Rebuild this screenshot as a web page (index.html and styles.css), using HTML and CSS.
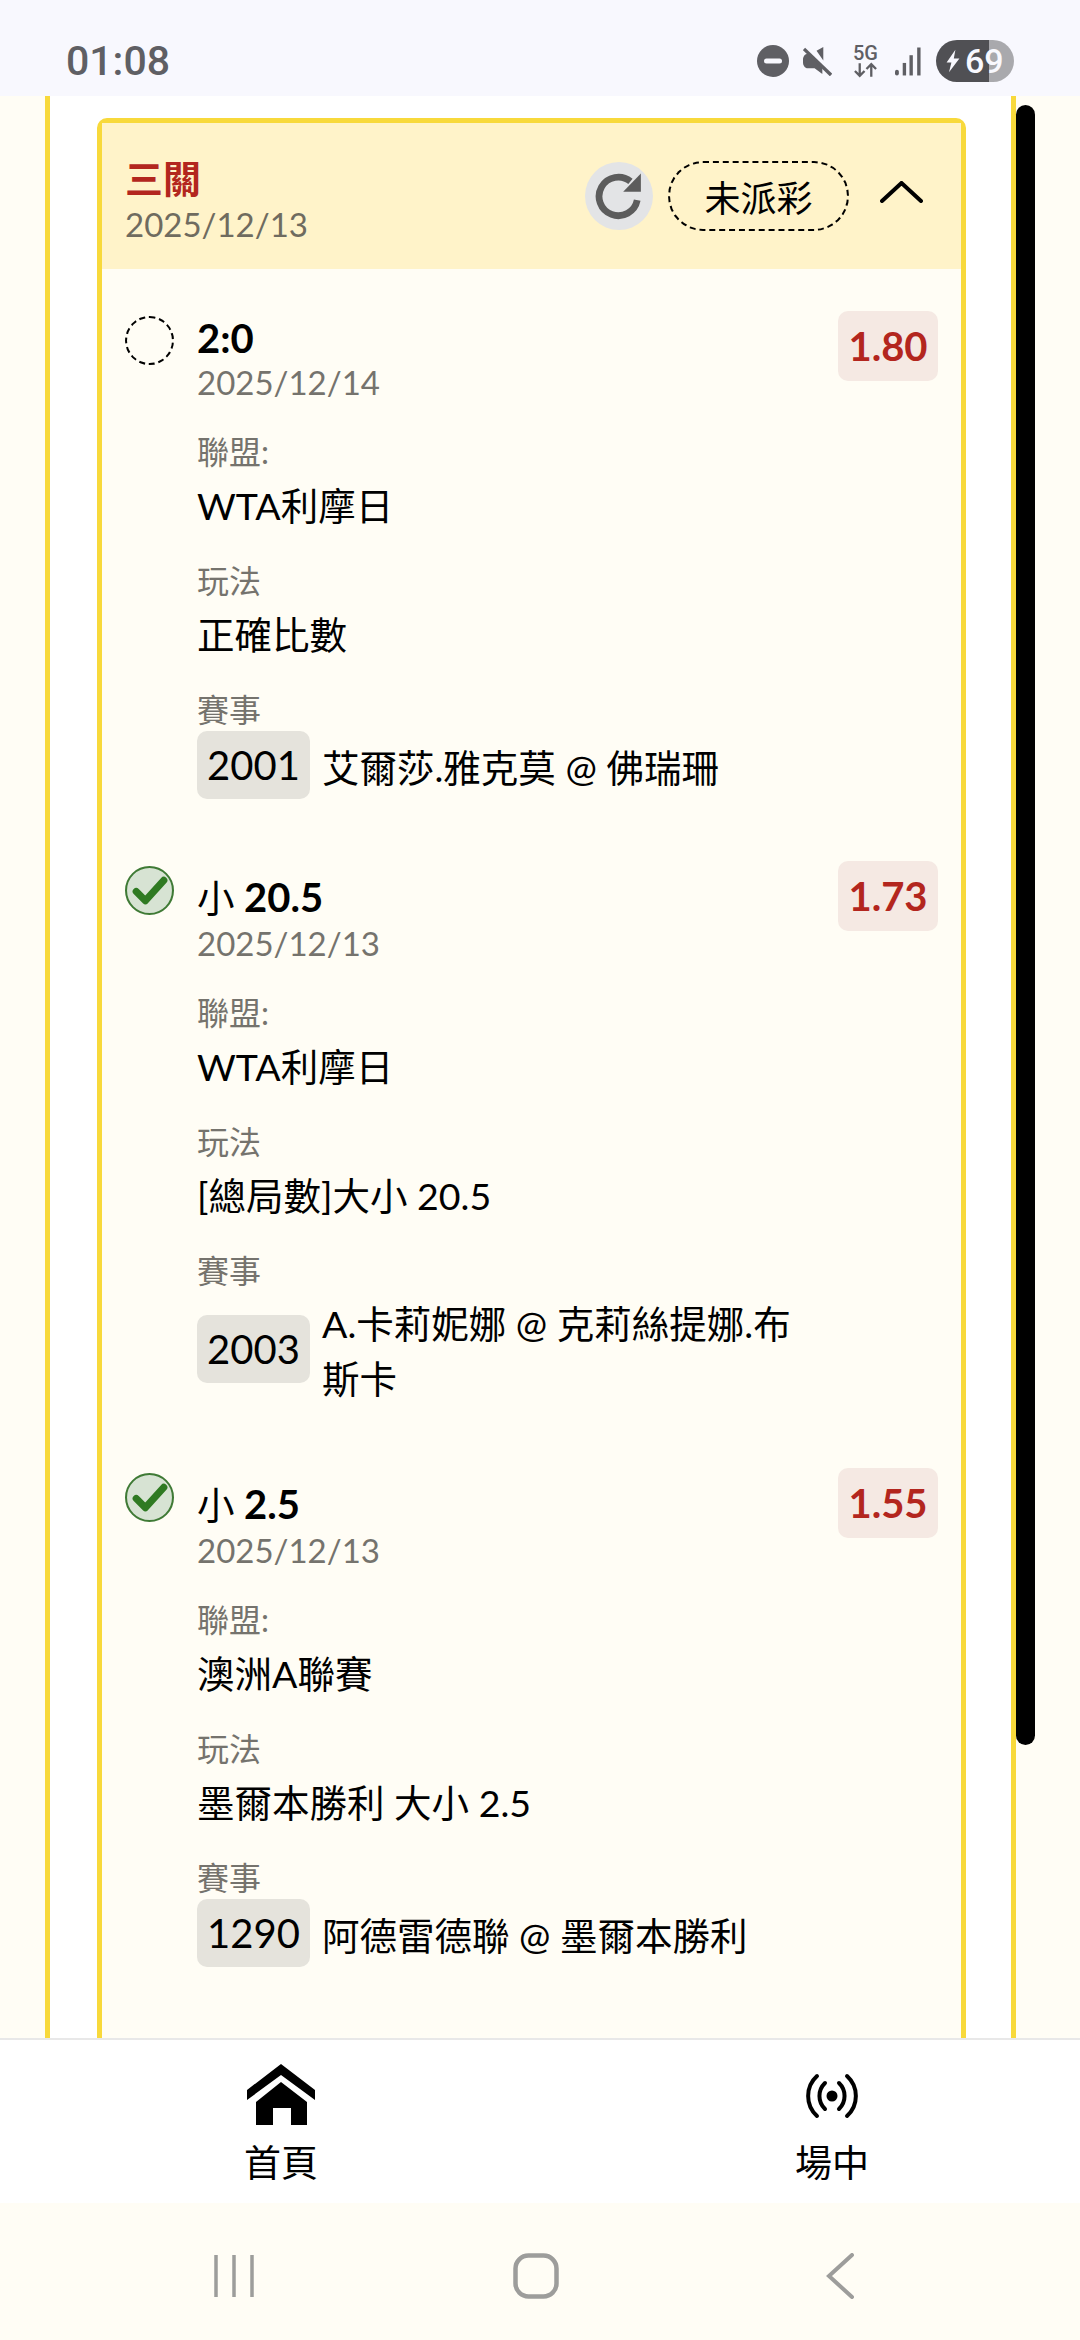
FILE: index.html
```html
<!DOCTYPE html>
<html lang="zh-Hant">
<head>
    <meta charset="UTF-8">
    <meta name="viewport" content="width=device-width, initial-scale=1.0">
    <title>三關</title>
    <link rel="stylesheet" href="styles.css">
</head>
<body>
    <div class="status-bar">
        <span class="clock">01:08</span>
        <div class="status-icons">
            <svg class="icon-dnd" viewBox="0 0 32 32"><circle cx="16" cy="16" r="16" fill="#5f5f64"/><rect x="7" y="13.5" width="18" height="5" rx="2.5" fill="#f8f8fe"/></svg>
            <svg class="icon-mute" viewBox="0 0 30 30"><path d="M0 13c0-3 2-6 5-6h3l12 12v9l-8-6H5c-3 0-5-3-5-6z M14 4l7-4v14z" fill="#5f5f64"/><path d="M3 0l27 28" stroke="#f8f8fe" stroke-width="4"/><path d="M1 2l28 27" stroke="#5f5f64" stroke-width="3.5"/></svg>
            <div class="net"><span class="net-label">5G</span><svg viewBox="0 0 26 16"><path d="M7 1v13M2 9l5 5 5-5M19 15V2M14 7l5-5 5 5" fill="none" stroke="#5f5f64" stroke-width="2.4"/></svg></div>
            <svg class="icon-signal" viewBox="0 0 28 30"><g fill="#5f5f64"><rect x="0" y="24" width="4" height="6" rx="2"/><rect x="8" y="17" width="3.5" height="13"/><rect x="15" y="9" width="3.5" height="21"/><rect x="23" y="1" width="3.5" height="29"/></g></svg>
            <div class="battery"><svg viewBox="0 0 20 28"><path d="M13 0L2 16h6L5 28 18 11h-7z" fill="#f8f8fe"/></svg><span>69</span></div>
        </div>
    </div>

    <main class="page">
        <div class="panel">
            <div class="bet-card">
                <div class="card-head">
                    <div>
                        <div class="card-title">三關</div>
                        <div class="card-date">2025/12/13</div>
                    </div>
                    <div class="card-actions">
                        <div class="refresh">
                            <svg viewBox="0 0 48 48"><path d="M41.5 28A18.5 18.5 0 1 1 35 10" fill="none" stroke="#5c5c5c" stroke-width="6.5"/><path d="M45 2.5V20H28z" fill="#5c5c5c"/></svg>
                        </div>
                        <div class="status-pill">未派彩</div>
                        <svg class="chevron" viewBox="0 0 43 22"><path d="M2 20L21.5 2 41 20" fill="none" stroke="#000" stroke-width="4" stroke-linecap="round"/></svg>
                    </div>
                </div>

                <div class="leg">
                    <div class="leg-mark pending"></div>
                    <div class="leg-body">
                        <div class="leg-top">
                            <div>
                                <div class="pick"><b>2:0</b></div>
                                <div class="leg-date">2025/12/14</div>
                            </div>
                            <div class="odds">1.80</div>
                        </div>
                        <div class="field-label">聯盟:</div>
                        <div class="field-value">WTA利摩日</div>
                        <div class="field-label">玩法</div>
                        <div class="field-value">正確比數</div>
                        <div class="field-label">賽事</div>
                        <div class="match">
                            <span class="match-no">2001</span>
                            <span class="match-name">艾爾莎.雅克莫 @ 佛瑞珊</span>
                        </div>
                    </div>
                </div>

                <div class="leg">
                    <svg class="leg-mark" viewBox="0 0 48 48"><circle cx="24" cy="24" r="23" fill="#d7e3d3" stroke="#3f7a35" stroke-width="2"/><path d="M11 25l9 9 18-20" fill="none" stroke="#2f7a22" stroke-width="7" stroke-linecap="round" stroke-linejoin="round"/></svg>
                    <div class="leg-body">
                        <div class="leg-top">
                            <div>
                                <div class="pick tall">小 <b>20.5</b></div>
                                <div class="leg-date">2025/12/13</div>
                            </div>
                            <div class="odds">1.73</div>
                        </div>
                        <div class="field-label">聯盟:</div>
                        <div class="field-value">WTA利摩日</div>
                        <div class="field-label">玩法</div>
                        <div class="field-value">[總局數]大小 20.5</div>
                        <div class="field-label">賽事</div>
                        <div class="match">
                            <span class="match-no">2003</span>
                            <span class="match-name">A.卡莉妮娜 @ 克莉絲提娜.布斯卡</span>
                        </div>
                    </div>
                </div>

                <div class="leg">
                    <svg class="leg-mark" viewBox="0 0 48 48"><circle cx="24" cy="24" r="23" fill="#d7e3d3" stroke="#3f7a35" stroke-width="2"/><path d="M11 25l9 9 18-20" fill="none" stroke="#2f7a22" stroke-width="7" stroke-linecap="round" stroke-linejoin="round"/></svg>
                    <div class="leg-body">
                        <div class="leg-top">
                            <div>
                                <div class="pick tall">小 <b>2.5</b></div>
                                <div class="leg-date">2025/12/13</div>
                            </div>
                            <div class="odds">1.55</div>
                        </div>
                        <div class="field-label">聯盟:</div>
                        <div class="field-value">澳洲A聯賽</div>
                        <div class="field-label">玩法</div>
                        <div class="field-value">墨爾本勝利 大小 2.5</div>
                        <div class="field-label">賽事</div>
                        <div class="match">
                            <span class="match-no">1290</span>
                            <span class="match-name">阿德雷德聯 @ 墨爾本勝利</span>
                        </div>
                    </div>
                </div>
            </div>
        </div>
        <div class="scrollbar"></div>
    </main>

    <nav class="tabs">
        <div class="tab">
            <svg class="tab-icon" viewBox="0 0 68 62"><path d="M34 0L68 26v10L34 11 0 36V26z" fill="#000"/><path d="M34 18L60 38v23H44V44H26v17H9V38z" fill="#000"/></svg>
            <span>首頁</span>
        </div>
        <div class="tab">
            <svg class="tab-icon" viewBox="0 0 68 62"><circle cx="34" cy="32" r="5.5" fill="#000"/><g fill="none" stroke="#000" stroke-width="4" stroke-linecap="round"><path d="M27 19A18 18 0 0 0 27 45M41 19A18 18 0 0 1 41 45"/><path d="M19 12A27 27 0 0 0 19 52M49 12A27 27 0 0 1 49 52"/></g></svg>
            <span>場中</span>
        </div>
    </nav>

    <div class="system-nav">
        <svg class="nav-recent" viewBox="0 0 42 44"><path d="M3 1v42M21 1v42M39 1v42" stroke="#9d9d9b" stroke-width="3.5" fill="none"/></svg>
        <svg class="nav-home" viewBox="0 0 46 46"><rect x="2.5" y="2.5" width="41" height="41" rx="13" fill="none" stroke="#9d9d9b" stroke-width="4.5"/></svg>
        <svg class="nav-back" viewBox="0 0 30 46"><path d="M27 2L4 23l23 21" fill="none" stroke="#9d9d9b" stroke-width="4" stroke-linecap="round"/></svg>
    </div>
</body>
</html>
```

FILE: styles.css
```css
* {
    box-sizing: border-box;
}
body {
    margin: 0;
    width: 1080px;
    height: 2340px;
    display: flex;
    flex-direction: column;
    overflow: hidden;
    background-color: #fffdf5;
    color: #000;
    font-family: Lato, "Noto Sans CJK TC", sans-serif;
}

/* status bar */
.status-bar {
    height: 96px;
    flex: none;
    display: flex;
    align-items: center;
    justify-content: space-between;
    padding: 26px 66px 0;
    background-color: #f8f8fe;
}
.clock {
    font-family: Roboto, sans-serif;
    font-size: 41px;
    font-weight: 500;
    color: #5f5f64;
}
.status-icons {
    display: flex;
    align-items: center;
}
.icon-dnd {
    width: 32px;
    height: 32px;
}
.icon-mute {
    width: 29px;
    height: 29px;
    margin-left: 14px;
}
.net {
    width: 25px;
    margin-left: 21px;
    display: flex;
    flex-direction: column;
    align-items: center;
}
.net-label {
    font-family: Roboto, sans-serif;
    font-size: 20px;
    line-height: 18px;
    font-weight: 500;
    color: #5f5f64;
}
.net svg {
    width: 25px;
    height: 16px;
}
.icon-signal {
    width: 27px;
    height: 30px;
    margin-left: 17px;
}
.battery {
    width: 78px;
    height: 42px;
    margin-left: 14px;
    border-radius: 21px;
    display: flex;
    align-items: center;
    padding-left: 9px;
    background: linear-gradient(90deg, #505054 0 53px, #a9a9ad 53px);
}
.battery svg {
    width: 16px;
    height: 24px;
}
.battery span {
    margin-left: 4px;
    font-family: Roboto, sans-serif;
    font-size: 34px;
    font-weight: 500;
    color: #f8f8fe;
}

/* page */
.page {
    position: relative;
    flex: 1;
    min-height: 0;
    overflow: hidden;
    padding: 0 64px 0 45px;
}
.panel {
    height: 100%;
    padding: 22px 45px 0 47px;
    background-color: #fff;
    border-left: 5px solid #f8d93b;
    border-right: 5px solid #f8d93b;
}
.scrollbar {
    position: absolute;
    left: 1016px;
    top: 9px;
    width: 19px;
    height: 1640px;
    border-radius: 10px;
    background-color: #000;
}
.bet-card {
    height: 2000px;
    border: 5px solid #f8d93b;
    border-radius: 10px;
    background-color: #fffdf5;
}
.card-head {
    height: 146px;
    display: flex;
    align-items: center;
    justify-content: space-between;
    padding: 0 38px 0 23px;
    background-color: #fff3c9;
}
.card-title {
    font-size: 38px;
    font-weight: 700;
    color: #b3261e;
}
.card-date {
    font-size: 33px;
    color: #6f6b5f;
}
.card-actions {
    display: flex;
    align-items: center;
}
.refresh {
    width: 68px;
    height: 68px;
    border-radius: 50%;
    display: flex;
    align-items: center;
    justify-content: center;
    background-color: #e3e4e6;
}
.refresh svg {
    width: 50px;
    height: 50px;
}
.status-pill {
    width: 181px;
    height: 70px;
    margin-left: 15px;
    border: 2px dashed #000;
    border-radius: 35px;
    display: flex;
    align-items: center;
    justify-content: center;
    font-size: 36px;
}
.chevron {
    width: 43px;
    height: 22px;
    margin-left: 31px;
    margin-bottom: 8px;
}

/* legs of the parlay */
.leg {
    display: flex;
    padding: 42px 23px 0;
    margin-bottom: 20px;
}
.leg-mark {
    flex: none;
    width: 49px;
    height: 49px;
    margin-top: 5px;
}
.leg-mark.pending {
    border: 2px dashed #000;
    border-radius: 50%;
}
.leg-body {
    flex: 1;
    margin-left: 23px;
}
.leg-top {
    display: flex;
    justify-content: space-between;
    align-items: flex-start;
    margin-bottom: 25px;
}
.pick {
    font-size: 37.5px;
    margin-top: 3px;
}
.pick.tall {
    padding-top: 4px;
}
.pick b {
    font-size: 40px;
}
.leg-date {
    font-size: 33px;
    color: #75736d;
}
.odds {
    width: 100px;
    height: 70px;
    border-radius: 10px;
    display: flex;
    align-items: center;
    justify-content: center;
    font-size: 40px;
    font-weight: 700;
    color: #b3261e;
    background-color: #f5e9e3;
}
.field-label {
    font-size: 32px;
    color: #75736d;
}
.field-value {
    font-size: 37.5px;
    margin: 3px 0 25px;
}
.match {
    display: flex;
    align-items: center;
}
.match-no {
    flex: none;
    width: 113px;
    height: 68px;
    border-radius: 10px;
    display: flex;
    align-items: center;
    justify-content: center;
    font-size: 40px;
    background-color: #e5e3dc;
}
.match-name {
    width: 480px;
    margin-left: 12px;
    padding: 2px 0;
    font-size: 37.5px;
}

/* bottom tabs */
.tabs {
    height: 165px;
    flex: none;
    display: flex;
    gap: 451px;
    padding-left: 231px;
    border-top: 2px solid #e8e8e8;
    background-color: #fff;
}
.tab {
    width: 100px;
    display: flex;
    flex-direction: column;
    align-items: center;
    padding-top: 24px;
    font-size: 37px;
}
.tab-icon {
    flex: none;
    width: 68px;
    height: 62px;
}
.tab span {
    margin-top: 8px;
}

/* system navigation */
.system-nav {
    height: 137px;
    flex: none;
    display: flex;
    align-items: center;
    padding-top: 8px;
    background-color: #fffdf5;
}
.nav-recent {
    width: 42px;
    height: 44px;
    margin-left: 213px;
}
.nav-home {
    width: 46px;
    height: 46px;
    margin-left: 258px;
}
.nav-back {
    width: 30px;
    height: 46px;
    margin-left: 266px;
}
```
